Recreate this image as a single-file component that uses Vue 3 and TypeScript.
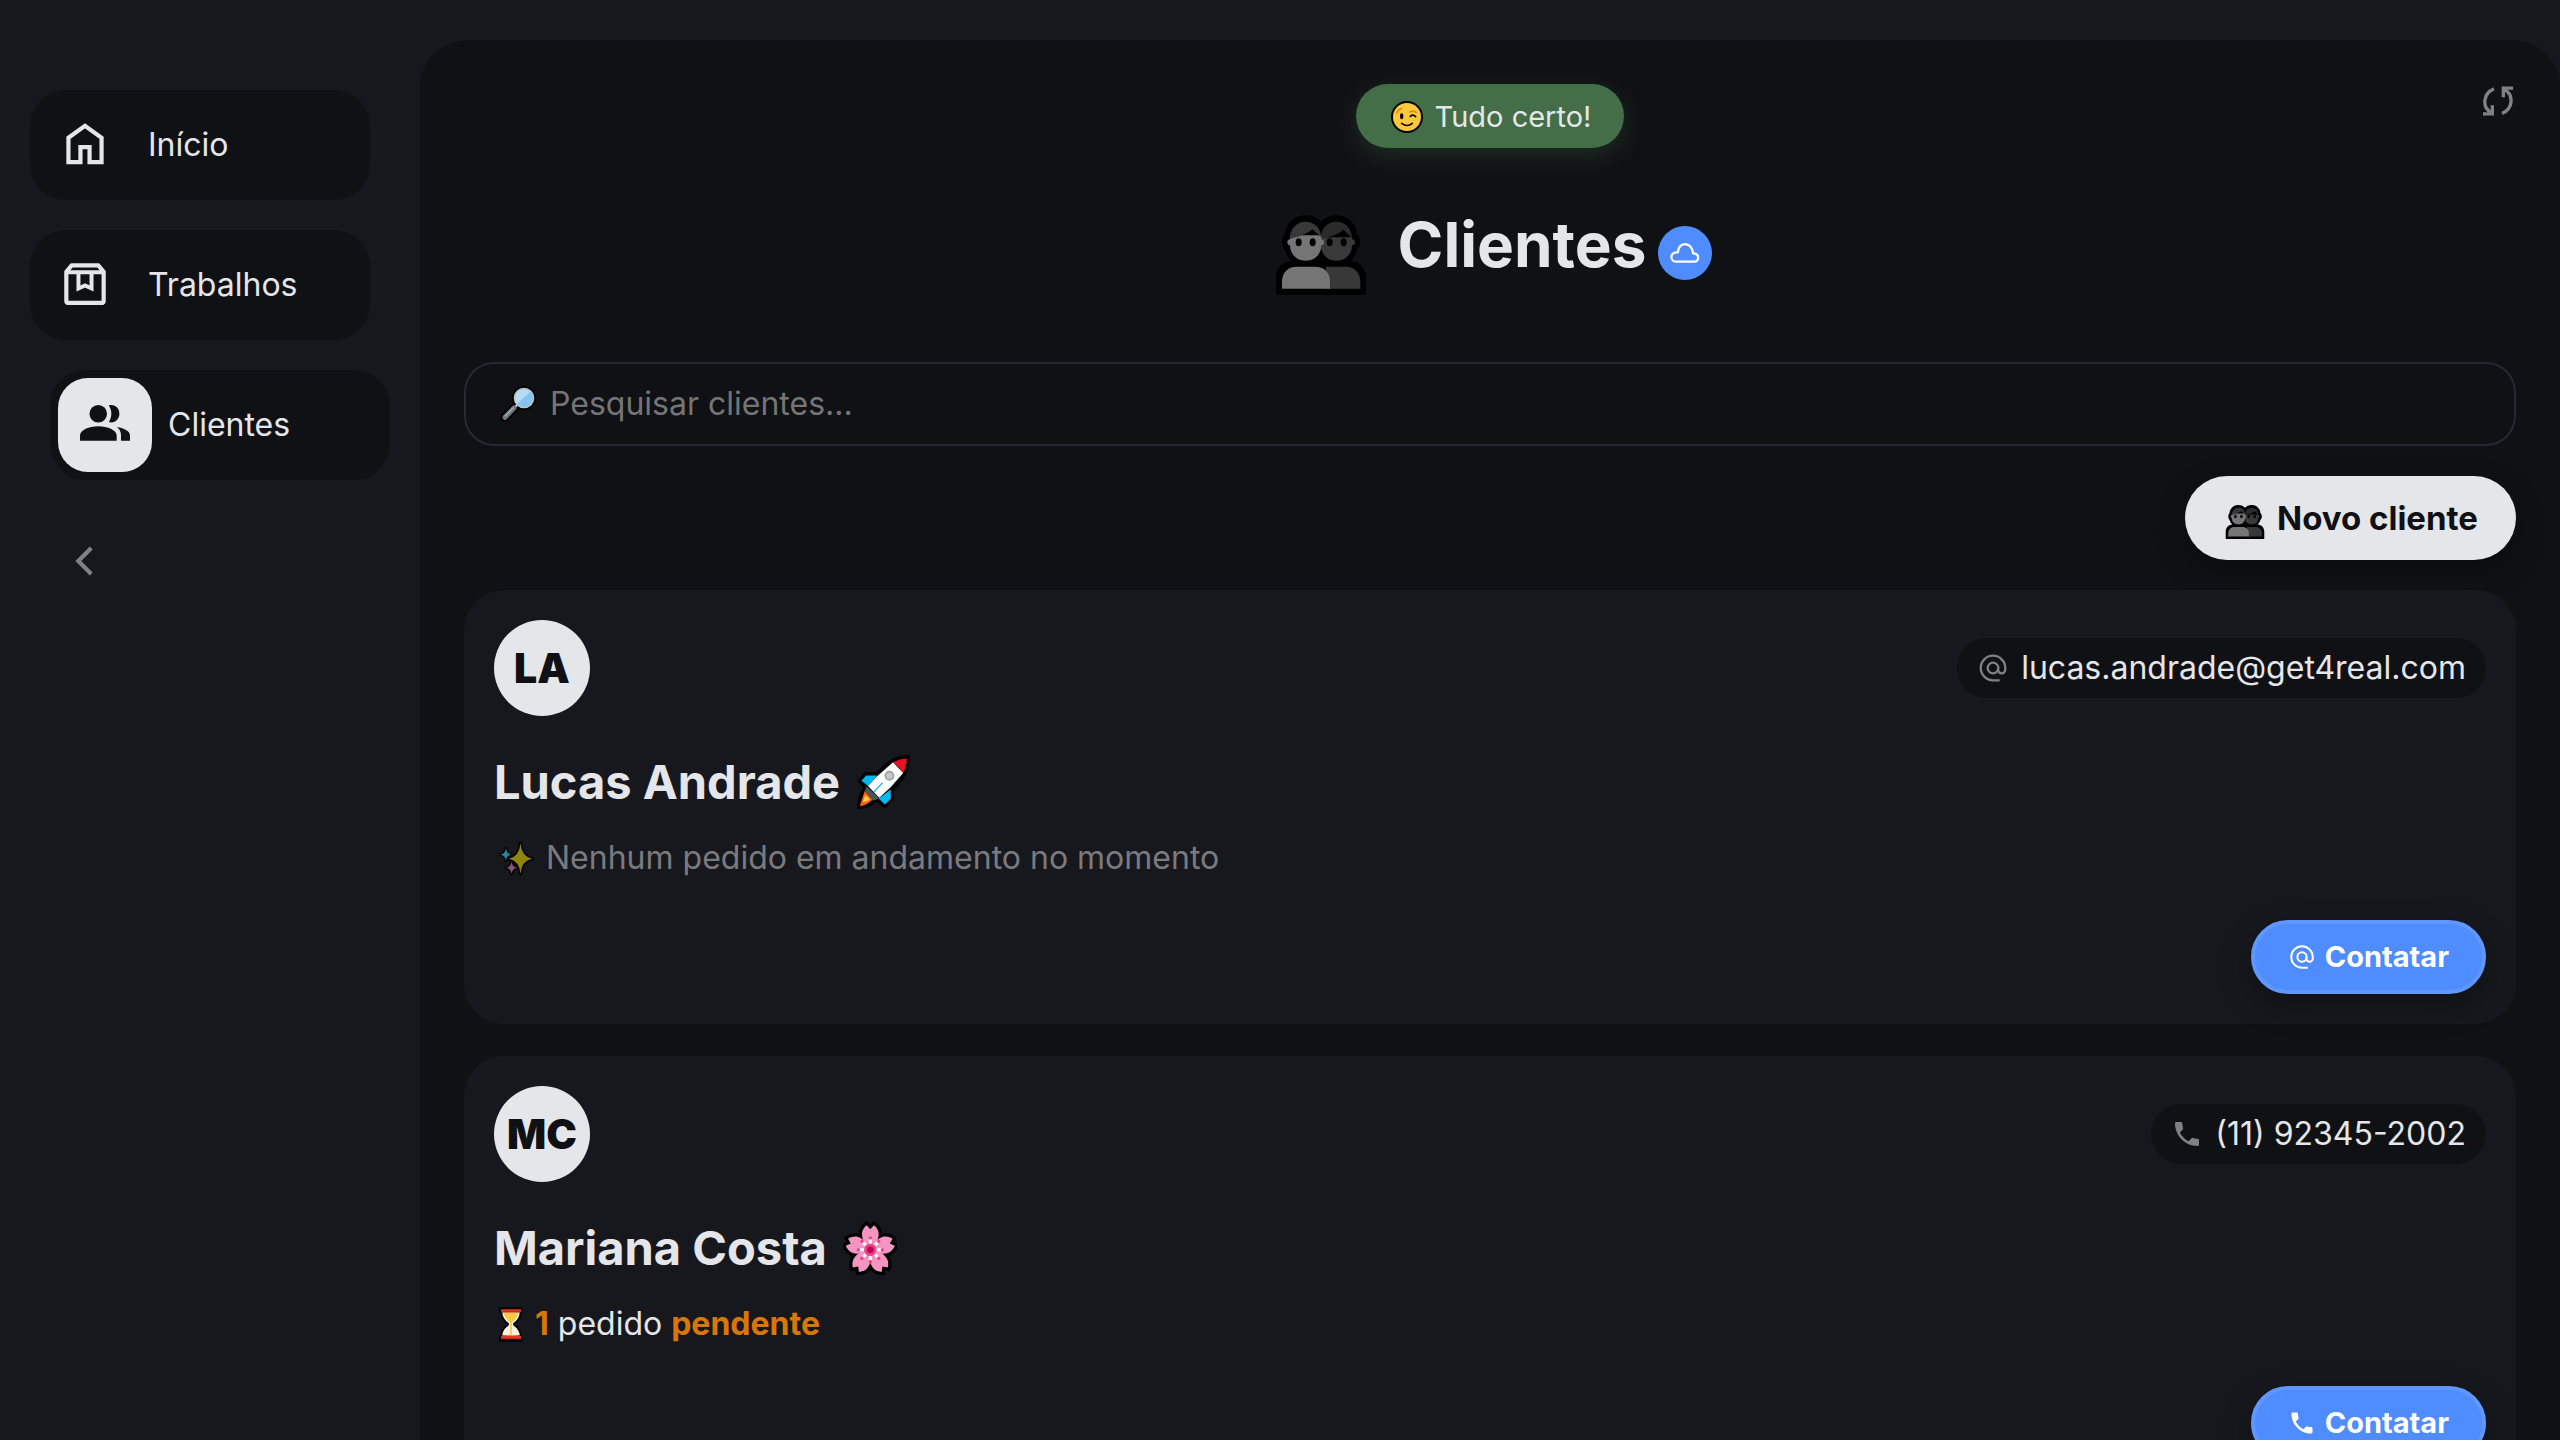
<script setup lang="ts">
import { ref, computed } from 'vue'

interface NavItem {
  label: string
  icon: string
  active: boolean
}

interface Client {
  initials: string
  name: string
  emoji: string
  contact: string
  channel: 'at' | 'phone'
  pending: number
}

const nav: NavItem[] = [
  { label: 'Início', icon: 'home', active: false },
  { label: 'Trabalhos', icon: 'box', active: false },
  { label: 'Clientes', icon: 'group', active: true },
]

const clients: Client[] = [
  { initials: 'LA', name: 'Lucas Andrade', emoji: 'rocket', contact: 'lucas.andrade@get4real.com', channel: 'at', pending: 0 },
  { initials: 'MC', name: 'Mariana Costa', emoji: 'blossom', contact: '(11) 92345-2002', channel: 'phone', pending: 1 },
]

const search = ref('')
const visibleClients = computed(() =>
  clients.filter((c) => c.name.toLowerCase().includes(search.value.toLowerCase())),
)
const rays = [0, 45, 90, 135, 180, 225, 270, 315]
const petals = [0, 72, 144, 216, 288]
</script>

<template>
  <svg class="sprite" width="0" height="0" aria-hidden="true">
    <symbol id="home" viewBox="0 0 24 24">
      <path d="M4.9 8.9 12 3.8l7.1 5.1v10.4h-5.15v-6.4h-3.9v6.4H4.9z" fill="none" stroke="currentColor" stroke-width="1.8" />
    </symbol>
    <symbol id="box" viewBox="0 0 24 24">
      <path d="M4 6.4 6.3 3.6h11.4L20 6.4v12.2q0 1.1-1.1 1.1H5.1q-1.1 0-1.1-1.1z" fill="none" stroke="currentColor" stroke-width="1.8" stroke-linejoin="round" />
      <path d="M4.2 6.5h15.6M9.2 6.5v7l2.8-1.3 2.8 1.3v-7" fill="none" stroke="currentColor" stroke-width="1.7" />
    </symbol>
    <symbol id="group" viewBox="0 0 24 24">
      <circle cx="9" cy="7" r="3.9" />
      <path d="M.9 19v-2.3c0-2.6 4-4.2 8.1-4.2s8.2 1.6 8.2 4.2V19zM19.1 19v-2.4c0-1.8-.8-3-1.8-3.7 3 .4 5.8 1.8 5.8 3.7V19zM13.7 3.3c2.7-.7 4.7 1.3 4.7 3.7s-2 4.4-4.7 3.7c1.5-2.3 1.5-5.1 0-7.4z" />
    </symbol>
    <symbol id="chevron" viewBox="0 0 24 24">
      <path d="M15 5.8 8.8 12l6.2 6.2" fill="none" stroke="currentColor" stroke-width="2" />
    </symbol>
    <symbol id="sync" viewBox="0 0 90 87">
      <path d="M33 7C-1 22-3 62 24 78M57 81C91 66 93 24 64 9" fill="none" stroke="currentColor" stroke-width="10" />
      <path d="M0 82h28V56M90 5H61v27" fill="none" stroke="currentColor" stroke-width="10" />
    </symbol>
    <symbol id="at" viewBox="0 0 24 24">
      <g fill="none" stroke="currentColor" stroke-width="1.7">
        <path d="M17 21.2h-5a9.2 9.2 0 1 1 9.2-9.2v1.4a2.7 2.7 0 0 1-5.4 0V12" />
        <circle cx="12" cy="12" r="4" />
      </g>
    </symbol>
    <symbol id="phone" viewBox="0 0 24 24">
      <path d="M6.62 10.79c1.44 2.83 3.76 5.14 6.59 6.59l2.2-2.2c.27-.27.67-.36 1.02-.24 1.12.37 2.33.57 3.57.57.55 0 1 .45 1 1V20c0 .55-.45 1-1 1-9.39 0-17-7.61-17-17 0-.55.45-1 1-1h3.5c.55 0 1 .45 1 1 0 1.25.2 2.45.57 3.57.11.35.03.74-.25 1.02z" />
    </symbol>
    <symbol id="cloud" viewBox="0 0 88 62">
      <path d="M16 58a14 14 0 0 1 1-29h5c0-35 46-33 47 3 21 0 20 26 3 26z" fill="none" stroke="currentColor" stroke-width="7" stroke-linejoin="round" />
    </symbol>
    <symbol id="people" viewBox="0 0 270 238">
      <path d="M89 0c20 0 36 8 46 20C145 8 161 0 181 0c34 0 59 23 62 56 12 10 14 36 0 48-4 14-10 24-19 33 28 2 46 22 46 50v51H0v-51c0-28 18-48 46-50-9-9-15-19-19-33-12-12-11-38 0-48C30 23 55 0 89 0z" fill="#000" />
      <circle cx="228" cy="81" r="9" fill="#393939" />
      <path d="M135 66h93v23c0 28-20 47-47 47s-46-19-46-47z" fill="#393939" />
      <path d="M135 66c1-28 20-47 46-47s46 19 47 49l-26-25c-14 13-36 22-66 24z" fill="#2b2b2b" />
      <circle cx="43" cy="81" r="9" fill="#757575" /><circle cx="135" cy="81" r="9" fill="#757575" />
      <path d="M42 60h94v29c0 28-20 47-47 47s-47-19-47-47z" fill="#757575" />
      <path d="M42 70c0-31 20-51 47-51 26 0 45 19 47 47l-27-24C94 55 72 64 42 70z" fill="#383838" />
      <path d="M150 154h58c27 0 45 18 45 45v21H150z" fill="#383838" />
      <path d="M62 154h56c27 0 44 18 44 45v21H18v-21c0-27 17-45 44-45z" fill="#757575" />
      <g fill="#000">
        <ellipse cx="68" cy="81" rx="9" ry="12" /><ellipse cx="110" cy="81" rx="9" ry="12" />
        <ellipse cx="161" cy="81" rx="9" ry="12" /><ellipse cx="203" cy="81" rx="9" ry="12" />
      </g>
    </symbol>
    <symbol id="wink" viewBox="0 0 96 96">
      <circle cx="48" cy="48" r="48" fill="#000" /><circle cx="48" cy="48" r="42" fill="#ffc83d" />
      <path d="M17 36q5-11 15-13M56 33q11-6 20 2" fill="none" stroke="#d6921c" stroke-width="5" stroke-linecap="round" />
      <ellipse cx="32" cy="46" rx="5" ry="9" fill="#000" />
      <path d="M58 46q8-7 16 1M32 67q16 13 32 0" fill="none" stroke="#000" stroke-width="5" stroke-linecap="round" />
    </symbol>
    <symbol id="magnifier" viewBox="0 0 106 108">
      <path d="m14 94 34-34" stroke="#000" stroke-width="27" stroke-linecap="round" />
      <circle cx="71" cy="36" r="36" fill="#000" />
      <path d="m44 63 8-8" stroke="#b9bcbe" stroke-width="7" />
      <path d="m14 94 27-28" stroke="#6a7880" stroke-width="15" stroke-linecap="round" />
      <path d="m15 90 23-24" stroke="#a8b0b4" stroke-width="4" stroke-linecap="round" />
      <circle cx="71" cy="36" r="31" fill="#c4c6c6" /><circle cx="71" cy="36" r="27" fill="#86c3f3" />
      <path d="M50 53a27 27 0 0 1 40-36z" fill="#b6dcf3" />
    </symbol>
    <symbol id="rocket" viewBox="0 0 163 164">
      <path d="M154 9c-27 0-50 12-66 30L64 61H30L15 79l16 16-4 14C16 122 11 138 11 155c17-1 32-7 45-20l12 1 19 15 18-19v-23l22-28c17-20 27-45 27-72z" stroke="#000" stroke-width="17" stroke-linejoin="miter" fill="#000" />
      <path d="M30 62h34L36 94 16 78zM105 105v29l-18 16-19-18z" fill="#00b9f1" />
      <path d="M112 22 62 66 36 94l34 36 34-31 39-44z" fill="#fff" />
      <path d="M112 22q19-10 42-11-1 24-11 44-13-20-31-33z" fill="#e81224" />
      <path d="m32 95 38 37-18 7-26-30z" fill="#4b565c" />
      <path d="M26 109 11 155q22-1 38-19z" fill="#f7630c" />
      <path d="M28 121 20 143q16-1 22-9z" fill="#ffc83d" />
      <circle cx="101" cy="63" r="12.5" fill="#c8c8c8" stroke="#a0a0a0" stroke-width="5" />
      <path d="m80 84-26 28" stroke="#00b9f1" stroke-width="4" />
    </symbol>
    <symbol id="sparkles" viewBox="0 0 104 106">
      <g stroke="#050506" stroke-width="11" stroke-linejoin="round">
        <path d="M64 7q3 40 35 47-32 7-35 45-3-38-35-45 32-7 35-47z" />
        <path d="M20 24q2 15 15 17-13 2-15 17-2-15-15-17 13-2 15-17zM37 64q2 15 15 17-13 2-15 17-2-15-15-17 13-2 15-17z" />
      </g>
      <path d="M64 7q3 40 35 47-32 7-35 45-3-38-35-45 32-7 35-47z" fill="#91860b" />
      <path d="M20 22q2 17 17 19-15 2-17 19-2-17-17-19 15-2 17-19z" fill="#29849a" />
      <path d="M37 62q2 17 17 19-15 2-17 19-2-17-17-19 15-2 17-19z" fill="#895477" />
    </symbol>
    <symbol id="blossom" viewBox="0 0 162 163">
      <g transform="translate(82 87)">
        <path v-for="a in petals" :key="'o' + a" :transform="`rotate(${a})`" d="M0 0C-14-12-27-30-25-52c2-10 8-18 14-22L0-62 11-74c6 4 12 12 14 22C27-30 14-12 0 0z" fill="#000" stroke="#000" stroke-width="20" stroke-linejoin="miter" />
        <path v-for="a in petals" :key="'p' + a" :transform="`rotate(${a})`" d="M0 0C-14-12-27-30-25-52c2-10 8-18 14-22L0-62 11-74c6 4 12 12 14 22C27-30 14-12 0 0z" fill="#f494c0" />
        <circle r="24" fill="#f494c0" />
        <g v-for="a in rays" :key="a" :transform="`rotate(${a})`">
          <path d="M0-16v-16" stroke="#fff" stroke-width="9" />
          <circle cy="-36" r="5" fill="#ec3f86" />
        </g>
        <circle r="19" fill="#ef4089" /><circle r="10" fill="#c00052" />
      </g>
    </symbol>
    <symbol id="hourglass" viewBox="0 0 73 105">
      <path d="M6 0h61q6 0 6 7v5q0 5-5 6-1 21-19 34 18 14 19 34 5 1 5 6v6q0 7-6 7H6q-6 0-6-7v-6q0-5 5-6 1-20 19-34Q6 39 5 18q-5-1-5-6V7q0-7 6-7z" fill="#000" />
      <path d="M10 15h53q0 19-20 34v6q20 14 20 31H10q0-17 20-31v-6Q10 34 10 15z" fill="#f5f2ea" />
      <path d="M14 17h45Q57 33 39 46v37l18 4H16l18-4V46Q16 33 14 17z" fill="#ffc83d" />
      <path d="M6 6h61v9H6zM6 87h61v9H6z" fill="#e8361f" />
      <path d="M6 11h61v4H6zM6 93h61v4H6z" fill="#c9281b" />
    </symbol>
  </svg>

  <div class="app">
    <aside class="sidebar">
      <nav class="nav">
        <a v-for="item in nav" :key="item.label" href="#" class="nav-item" :class="{ active: item.active }">
          <span class="nav-icon"><svg><use :href="'#' + item.icon" /></svg></span>
          <span>{{ item.label }}</span>
        </a>
      </nav>
      <button class="collapse" type="button" aria-label="Recolher menu"><svg><use href="#chevron" /></svg></button>
    </aside>

    <main class="main">
      <button class="sync" type="button" aria-label="Sincronizar"><svg><use href="#sync" /></svg></button>
      <div class="toast" role="status"><svg><use href="#wink" /></svg><span>Tudo certo!</span></div>
      <header class="heading">
        <svg class="heading-emoji"><use href="#people" /></svg>
        <h1>Clientes</h1>
        <span class="cloud"><svg><use href="#cloud" /></svg></span>
      </header>

      <label class="search">
        <svg><use href="#magnifier" /></svg>
        <input v-model="search" type="text" placeholder="Pesquisar clientes..." aria-label="Pesquisar clientes">
      </label>

      <button class="new-client" type="button"><svg><use href="#people" /></svg><span>Novo cliente</span></button>

      <section class="list">
        <article v-for="client in visibleClients" :key="client.name" class="card">
          <div class="card-top">
            <span class="avatar">{{ client.initials }}</span>
            <span class="contact"><svg><use :href="'#' + client.channel" /></svg><span>{{ client.contact }}</span></span>
          </div>
          <h2>{{ client.name }}<svg><use :href="'#' + client.emoji" /></svg></h2>
          <p v-if="client.pending" class="status">
            <svg class="hourglass"><use href="#hourglass" /></svg>
            <span><b>{{ client.pending }}</b> pedido <b>pendente</b></span>
          </p>
          <p v-else class="status idle">
            <svg><use href="#sparkles" /></svg><span>Nenhum pedido em andamento no momento</span>
          </p>
          <button class="reach" type="button"><svg><use :href="'#' + client.channel" /></svg><span>Contatar</span></button>
        </article>
      </section>
    </main>
  </div>
</template>

<style>
body {
  background: #17181d;
}
</style>

<style scoped>
* {
  box-sizing: border-box;
}
.sprite {
  position: absolute;
}
.app {
  display: flex;
  height: 100vh;
  overflow: hidden;
  background: #17181d;
  color: #e5e6ea;
  font: 400 32px/40px Inter, sans-serif;
}
.app svg {
  display: block;
  flex: none;
  fill: currentColor;
}
button {
  font: inherit;
  border: 0;
  padding: 0;
  background: none;
  color: inherit;
  cursor: pointer;
}
.sidebar {
  flex: none;
  width: 420px;
  padding: 90px 30px 0;
}
.nav {
  display: flex;
  flex-direction: column;
  gap: 30px;
}
.nav-item {
  display: flex;
  align-items: center;
  gap: 16px;
  width: 340px;
  height: 110px;
  padding: 8px;
  border-radius: 36px;
  background: #101114;
  color: inherit;
  text-decoration: none;
}
.nav-icon {
  display: grid;
  place-items: center;
  width: 94px;
  height: 94px;
  border-radius: 30px;
}
.nav-icon svg {
  width: 56px;
  height: 56px;
}
.nav-item.active {
  margin-left: 20px;
}
.active .nav-icon {
  background: #e5e6ea;
  color: #101114;
}
.active .nav-icon svg {
  width: 54px;
  height: 54px;
}
.collapse {
  display: block;
  margin: 56px 0 0 30px;
  color: #808185;
}
.collapse svg {
  width: 50px;
  height: 50px;
}
.main {
  position: relative;
  flex: 1;
  min-width: 0;
  display: flex;
  flex-direction: column;
  margin-top: 40px;
  padding: 44px 44px 0;
  border-radius: 48px 48px 0 0;
  background: #101114;
}
.main > * {
  flex: none;
}
.sync {
  position: absolute;
  top: 46px;
  right: 47px;
  color: #808185;
}
.sync svg {
  width: 30px;
  height: 30px;
}
.toast {
  align-self: center;
  display: flex;
  align-items: center;
  gap: 12px;
  height: 64px;
  padding: 2px 33px 0 35px;
  border-radius: 32px;
  background: #436e47;
  box-shadow: 0 8px 24px rgba(67, 110, 71, 0.3);
  font-size: 29px;
}
.toast svg {
  width: 32px;
  height: 32px;
}
.heading {
  display: flex;
  justify-content: center;
  align-items: flex-end;
  margin: 47px 0 67px;
}
.heading-emoji {
  width: 90px;
  height: 80px;
  margin: 0 32px 0 8px;
}
h1 {
  margin: 0;
  font-size: 62px;
  line-height: 100px;
  font-weight: 700;
}
.cloud {
  display: grid;
  place-items: center;
  width: 54px;
  height: 54px;
  margin: 0 0 15px 12px;
  border-radius: 50%;
  background: #4f8cff;
  color: #fff;
}
.cloud svg {
  width: 30px;
  height: 20px;
}
.search {
  display: flex;
  align-items: center;
  gap: 14px;
  height: 84px;
  padding: 0 34px;
  border: 2px solid #252931;
  border-radius: 30px;
}
.search svg {
  width: 36px;
  height: 36px;
}
.search input {
  flex: 1;
  min-width: 0;
  padding: 0;
  border: 0;
  outline: 0;
  background: none;
  color: inherit;
  font: inherit;
}
.search input::placeholder {
  color: #757575;
}
.new-client {
  align-self: flex-end;
  display: flex;
  align-items: center;
  gap: 12px;
  height: 84px;
  margin: 30px 0;
  padding: 0 38px 0 40px;
  border-radius: 42px;
  background: #e5e6ea;
  color: #101114;
  font-size: 33px;
  font-weight: 700;
  box-shadow: 0 12px 32px rgba(0, 0, 0, 0.3);
}
.new-client svg {
  width: 40px;
  height: 34px;
  margin-top: 8px;
}
.list {
  display: flex;
  flex-direction: column;
  gap: 32px;
}
.card {
  display: flex;
  flex-direction: column;
  padding: 30px;
  border-radius: 40px;
  background: #17181d;
}
.card-top {
  display: flex;
  align-items: center;
  justify-content: space-between;
}
.avatar {
  display: grid;
  place-items: center;
  width: 96px;
  height: 96px;
  border-radius: 50%;
  background: #e5e6ea;
  color: #101114;
  font-size: 41px;
  font-weight: 900;
}
.contact {
  display: flex;
  align-items: center;
  gap: 12px;
  height: 60px;
  padding: 0 20px;
  border-radius: 30px;
  background: #101114;
}
.contact svg {
  width: 32px;
  height: 32px;
  color: #808185;
}
h2 {
  display: flex;
  align-items: center;
  gap: 16px;
  margin: 36px 0 26px;
  font-size: 47px;
  line-height: 60px;
  font-weight: 700;
}
h2 svg {
  width: 54px;
  height: 54px;
}
.status {
  display: flex;
  align-items: center;
  gap: 12px;
  margin: 0 0 42px;
  padding-left: 5px;
}
.status svg {
  width: 35px;
  height: 35px;
}
.status .hourglass {
  width: 24px;
}
.status b {
  color: #d97706;
  font-weight: 700;
}
.idle {
  color: #7a7b7f;
}
.reach {
  align-self: flex-end;
  display: flex;
  align-items: center;
  gap: 9px;
  height: 74px;
  padding: 0 33px;
  border: 4px solid #5f97ff;
  border-radius: 37px;
  background: #4f8cff;
  color: #fff;
  font-size: 29px;
  font-weight: 700;
  box-shadow: 0 12px 32px rgba(0, 0, 0, 0.3);
}
.reach svg {
  width: 28px;
  height: 28px;
}
</style>
